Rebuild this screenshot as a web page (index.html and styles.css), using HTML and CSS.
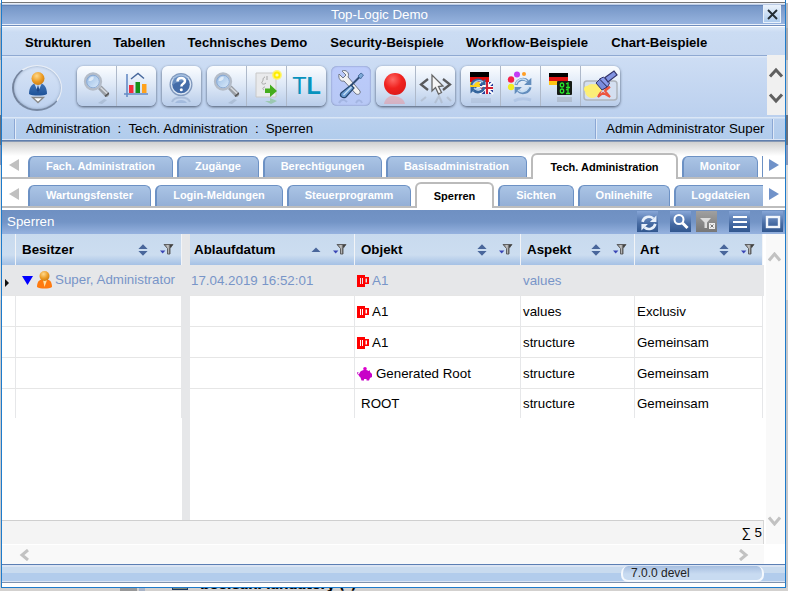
FILE: index.html
```html
<!DOCTYPE html>
<html lang="de">
<head>
<meta charset="utf-8">
<title>Top-Logic Demo</title>
<link rel="stylesheet" href="styles.css">
</head>
<body>
<svg class="defs" width="0" height="0">
  <defs>
    <linearGradient id="gLens" x1="0" y1="0" x2="1" y2="1"><stop offset="0" stop-color="#8fb6e2"/><stop offset="1" stop-color="#e3f0fd"/></linearGradient>
    <radialGradient id="gRed" cx=".4" cy=".3" r=".8"><stop offset="0" stop-color="#ff6a66"/><stop offset=".5" stop-color="#f0221f"/><stop offset="1" stop-color="#d81818"/></radialGradient>
    <radialGradient id="gHead" cx=".4" cy=".3" r=".75"><stop offset="0" stop-color="#ffd98a"/><stop offset=".6" stop-color="#eb9a22"/><stop offset="1" stop-color="#c87a12"/></radialGradient>
    <linearGradient id="gBody" x1="0" y1="0" x2="0" y2="1"><stop offset="0" stop-color="#3f74b8"/><stop offset="1" stop-color="#1e5298"/></linearGradient>
    <linearGradient id="gFunnel"><stop offset="0" stop-color="#666"/><stop offset=".45" stop-color="#ccc"/><stop offset=".7" stop-color="#444"/><stop offset="1" stop-color="#333"/></linearGradient>
    <symbol id="search" viewBox="0 0 32 34">
      <g opacity=".22"><path d="M18 33l6-4 3 1-5 4z" fill="#678"/></g>
      <path d="M18 19l3.500-3.500 7.500 7.500c1 2-1.500 4.500-3.500 4z" fill="#999ea5"/><path d="M20.500 17.500l6.500 6" stroke="#d8dade" stroke-width="1.600"/>
      <path d="M25.500 27l3.500-3v-1.800l-4.500 3.500z" fill="#555"/>
      <circle cx="13" cy="11.500" r="8" fill="url(#gLens)" stroke="#b4bcc8" stroke-width="2.300"/>
      <circle cx="13" cy="11.500" r="6.300" fill="none" stroke="#7899c8" stroke-width=".7"/>
      <path d="M8.500 11a5 5 0 0 1 5-4.500c1 3-2 5-5 4.500z" fill="#fff" opacity=".6"/>
    </symbol>
    <symbol id="sort" viewBox="0 0 10 12"><path d="M5 .3L9.600 5H.4zM5 11.700L.4 7h9.200z" fill="#49669b"/></symbol>
    <symbol id="sortup" viewBox="0 0 10 12"><path d="M5 3.400L9.500 8H.5z" fill="#49669b"/></symbol>
    <symbol id="filter" viewBox="0 0 14 11"><path d="M4 .5h9L10 4.500v5.500H7.500v-5.500z" fill="url(#gFunnel)" stroke="#555" stroke-width=".9"/><path d="M0 6.600h5.400L2.700 9.500z" fill="#3a46b5"/></symbol>
    <symbol id="cup" viewBox="0 0 12 12"><path d="M0 0h8v2h4v7H8v3H0zM3 3v6h1V3zm2 0v6h1V3zm3.500 .5v4h1.500v-4z" fill="#f00" fill-rule="evenodd"/></symbol>
    <symbol id="cycle" viewBox="0 0 18 18"><g fill="none" stroke="currentColor" stroke-width="2.600"><path d="M2.600 8a6.500 6.500 0 0 1 10.800-3.300"/><path d="M15.400 10A6.500 6.500 0 0 1 4.600 13.300"/></g><path d="M16.500 1.500V8H10zM1.500 16.500V10H8z" fill="currentColor"/></symbol>
  </defs>
</svg>
<div class="backdrop">
  <div class="behind"><span class="behind-bar"></span><span class="behind-bar2"></span><span class="behind-box"></span><span class="behind-text">booleanMandatory (*)</span></div>
  <div class="window">
    <header class="titlebar">
      <span class="title">Top-Logic Demo</span>
      <button class="close" aria-label="Schließen"><svg width="11" height="11" viewBox="0 0 11 11"><path d="M1 1l9 9M10 1l-9 9" stroke="#222c33" stroke-width="1.900"/></svg></button>
    </header>
    <nav class="menubar"><span>Strukturen</span><span>Tabellen</span><span class="wide">Technisches Demo</span><span>Security-Beispiele</span><span class="wide">Workflow-Beispiele</span><span>Chart-Beispiele</span></nav>
    <div class="toolbar">
      <div class="avatar"><svg width="22" height="34" viewBox="0 0 22 34">
        <path d="M2 23c0-8 4-11 9-11s9 3 9 11c-3 2-15 2-18 0z" fill="url(#gBody)"/><path d="M7.500 13l3.500 8 3.500-8z" fill="#c5daf4"/><path d="M11 14l1.500 5-1.500 3-1.500-3z" fill="#1c4688"/>
        <circle cx="11" cy="7.500" r="6.500" fill="url(#gHead)"/><path d="M5.500 26.500h11L11 31.500z" fill="#fff" stroke="#888" stroke-width="1.300"/></svg></div>
      <div class="group">
        <span class="tool"><svg width="32" height="34"><use href="#search"/></svg></span>
        <span class="tool"><svg width="32" height="34" viewBox="0 0 32 34"><g stroke="#668bc5" stroke-width="1.600"><path d="M7 4v23M4 24h24"/></g><path d="M11 9l7-5.500 6 5" fill="none" stroke="#46679c" stroke-width="1.400"/><path d="M9 15h4.500v8H9z" fill="#f52c3c"/><path d="M15.500 12H20v11h-4.500z" fill="#149018"/><path d="M22 14h4.500v9H22z" fill="#ffa21c"/></svg></span>
      </div>
      <div class="group">
        <span class="tool"><svg width="32" height="34" viewBox="0 0 32 34"><circle cx="16" cy="14.500" r="11.500" fill="#8199bd"/><circle cx="16" cy="14.500" r="10.200" fill="#dce7f5"/><circle cx="16" cy="14.500" r="8.800" fill="#446ca8"/><path d="M8 15c3-4 12-3 15.500-6a8.300 8.300 0 0 0-15.500 6z" fill="#7fa3d0" opacity=".6"/><path d="M12.500 11.500c0-5 7.500-4.500 7.500-.5 0 3-3.600 2.500-3.600 5.500" fill="none" stroke="#fff" stroke-width="2.500"/><circle cx="16.300" cy="19.800" r="1.500" fill="#fff"/><path d="M7 32c2-6 16-6 18 0" fill="none" stroke="#9db2d2" stroke-width="2" opacity=".7"/><path d="M10 33c2-4 10-4 12 0z" fill="#7898c8" opacity=".4"/></svg></span>
      </div>
      <div class="group">
        <span class="tool"><svg width="32" height="34"><use href="#search"/></svg></span>
        <span class="tool"><svg width="32" height="34" viewBox="0 0 32 34"><path d="M6 3h20v24H6z" fill="#e9eaec" stroke="#c8c8c8"/><path d="M15 7c-3 1-1 3-3 5-1 2 2 3 4 1m-1 4c-2 0-3 2-1 3M17 6v4" fill="none" stroke="#a5a5a5"/><path d="M15 18.500h5v-4l7 6.500-7 6v-4h-5z" fill="#45ad1d"/><path d="M15 31h5v-3l7 3-6 3z" fill="#63b95a" opacity=".4"/><circle cx="27" cy="5" r="5" fill="#fff25c" opacity=".8"/><circle cx="27" cy="5" r="3.500" fill="#ffed00"/><circle cx="27" cy="5" r="1.600" fill="#fffda8"/></svg></span>
        <span class="tool tl">T<b>L</b></span>
      </div>
      <div class="group active">
        <span class="tool"><svg width="32" height="34" viewBox="0 0 32 34"><path d="M5 4l4 4 3-3-4-4c4-2 8 2 6 6l12 14c1 3-2 4-4 3L10 11C7 12 4 9 5 4z" fill="#f2f2f2" stroke="#6e7686"/><path d="M26 6.500l-9 9" stroke="#304d76" stroke-width="2"/><path d="M24 6l3-3 2.500 2-3 4z" fill="#7ea9d8" stroke="#345a8c" stroke-width=".7"/><path d="M17 15l3 3-8 9c-3 2-7-1-5-4z" fill="#6a9bd2" stroke="#24466f" stroke-width="1.200"/><path d="M17.500 17l-8 8" stroke="#c8e2f8" stroke-width="1.200"/><path d="M5 33c3-5 6-3 8-1M22 33c2-4 5-3 6 0" stroke="#7d91bd" opacity=".35" stroke-width="2" fill="none"/></svg></span>
      </div>
      <div class="group">
        <span class="tool"><svg width="32" height="34" viewBox="0 0 32 34"><circle cx="16" cy="14" r="11" fill="url(#gRed)"/><path d="M5 34c1-6 6-9 11-8s9 3 10 8z" fill="#f77" opacity=".35"/></svg></span>
        <span class="tool"><svg width="34" height="34" viewBox="0 0 34 34"><path d="M10 9l-7 5.500L10 20M25 9l7 5.500-7 5.500" fill="none" stroke="#58595c" stroke-width="2.300"/><path d="M14 5v16l3.500-3.500 3 6.500 3-1.500-3-6 4.500-.5z" fill="#f6f6f6" stroke="#666" stroke-width="1.300"/><path d="M8 27l-5 4M17 33l4-7 3 7M29 27l4 4" fill="none" stroke="#888" opacity=".25" stroke-width="2"/></svg></span>
      </div>
      <div class="group">
        <span class="tool"><svg width="32" height="34" viewBox="0 0 32 34"><path d="M6 2h19v5H6z"/><path d="M6 7h19v5H6z" fill="#e10d0d"/><path d="M6 12h19v5H6z" fill="#ffd21d"/><path d="M16 12h13v12H16z" fill="#263c9a"/><path d="M16 12l13 12M29 12L16 24" stroke="#fff" stroke-width="2"/><path d="M16 18h13M23 12v12" stroke="#fff" stroke-width="4"/><path d="M16 18h13M23 12v12" stroke="#d31f32" stroke-width="2.200"/><svg x="5" y="7" width="18" height="18" color="#34659d"><use href="#cycle"/></svg><path d="M9 15c2-5 8-5 10-3M10 18c2 2 5 2 8-1" fill="none" stroke="#a9cbea" stroke-width="1.500"/><path d="M7 28h20v5H7z" fill="#678" opacity=".13"/></svg></span>
        <span class="tool"><svg width="32" height="34" viewBox="0 0 32 34"><circle cx="13" cy="4.500" r="3" fill="#c33cf5"/><circle cx="20" cy="4" r="2" fill="#ff9e24"/><circle cx="7" cy="9.500" r="3.200" fill="#f52149"/><circle cx="7" cy="17" r="3.200" fill="#f1ec22"/><svg x="9" y="6" width="20" height="20" color="#628dbd"><use href="#cycle"/></svg><path d="M12 14c2-6 8-6 11-3M14 20c3 3 8 2 11-3" fill="none" stroke="#c6def3" stroke-width="1.500"/><path d="M10 31c5-3 10-3 17-1" stroke="#7a9ccc" stroke-width="3" opacity=".25" fill="none"/></svg></span>
        <span class="tool"><svg width="32" height="34" viewBox="0 0 32 34"><path d="M5 3h19v4H5z"/><path d="M5 7h19v4H5z" fill="#df1212"/><path d="M5 11h19v4H5z" fill="#ffc514"/><rect x="13" y="11" width="15" height="14" rx="1" fill="#161b16"/><g fill="none" stroke="#28e42a" stroke-width="1.300"><ellipse cx="18" cy="15" rx="1.700" ry="2"/><ellipse cx="18" cy="21" rx="1.700" ry="2"/><path d="M22 14l2-1v4.500m-2 0h4M22 20l2-1v4.500m-2 0h4"/></g><path d="M13 27h15v5H13z" fill="#777" opacity=".25"/></svg></span>
        <span class="tool"><svg width="38" height="36" viewBox="0 0 38 36"><rect x="3" y="12" width="33" height="19" rx="3" fill="#d4dff0" stroke="#aeb4bc" stroke-width="1.500"/><path d="M19 17l3 3 7-2-5 4 5 6-7-4-5 4 3-7" fill="none" stroke="#ed553f" stroke-width="2"/><circle cx="11" cy="22" r="7" fill="#fff06b" opacity=".9"/><circle cx="6" cy="20" r="3" fill="#fff06b"/><path d="M10 18l6-4 6 6-5 5z" fill="#ffee72"/><path d="M15 14l4-4 7 8-5 3z" fill="#798bdc" stroke="#32336a"/><path d="M18.500 10l4-2 6 6-2 4z" fill="#8b9cec" stroke="#32336a"/><path d="M24 8.500L33 2l3 4-9 7z" fill="#8193e2" stroke="#32336a" stroke-width="1.200"/></svg></span>
      </div>
      <div class="toolscroll"><svg width="18" height="60" viewBox="0 0 18 60"><path d="M3 21.500L9 15l6 6.500M3 39.500L9 46l6-6.500" fill="none" stroke="#606060" stroke-width="3"/></svg></div>
    </div>
    <div class="crumbs"><span class="trail"><span>Administration</span><i>:</i><span>Tech. Administration</span><i>:</i><span>Sperren</span></span><span class="user">Admin Administrator Super</span></div>
    <div class="tabs first"><svg class="arrow" width="10" height="12"><path d="M10 0v12L0 6z" fill="#c0c0c0"/></svg>
      <div class="tablist one"><span>Fach. Administration</span><span>Zugänge</span><span>Berechtigungen</span><span>Basisadministration</span><span class="current">Tech. Administration</span><span>Monitor</span><span class="cut"></span></div>
      <svg class="arrow" width="10" height="12"><path d="M0 0v12l10-6z" fill="#7092c9"/></svg></div>
    <div class="tabs second"><svg class="arrow" width="10" height="12"><path d="M10 0v12L0 6z" fill="#c0c0c0"/></svg>
      <div class="tablist two"><span>Wartungsfenster</span><span>Login-Meldungen</span><span>Steuerprogramm</span><span class="current">Sperren</span><span>Sichten</span><span>Onlinehilfe</span><span class="last">Logdateien</span></div>
      <svg class="arrow" width="10" height="12"><path d="M0 0v12l10-6z" fill="#7092c9"/></svg></div>
    <div class="panelhead"><span>Sperren</span>
      <div class="actions">
        <b><svg width="18" height="18" viewBox="-1 -1 20 20" color="#e8f0fa"><use href="#cycle"/></svg></b>
        <b><svg width="20" height="20" viewBox="0 0 20 20"><circle cx="8" cy="7.500" r="4.500" fill="#587eb8" stroke="#fff" stroke-width="2"/><path d="M11.500 11l5 5" stroke="#fff" stroke-width="3"/></svg></b>
        <b class="off"><svg width="20" height="20" viewBox="0 0 20 20"><path d="M3 6h11l-4 4.500V16H7.500v-5.500z" fill="#ddd"/><path d="M12 11h6v6h-6z" fill="#eee"/><path d="M13.500 12.500l3 3m0-3l-3 3" stroke="#777"/></svg></b>
        <b><svg width="20" height="20" viewBox="0 0 20 20"><path d="M3 5h14M3 10h14M3 15h14" stroke="#fff" stroke-width="2"/></svg></b>
        <b><svg width="20" height="20" viewBox="0 0 20 20"><rect x="4" y="5" width="12" height="10" fill="none" stroke="#f2f6fc" stroke-width="2.400"/></svg></b>
      </div>
    </div>
    <div class="content">
      <div class="main">
        <div class="row head"><div></div><div>Besitzer<svg class="s"><use href="#sort"/></svg><svg class="f"><use href="#filter"/></svg></div><div class="gap"></div><div>Ablaufdatum<svg class="s"><use href="#sortup"/></svg><svg class="f"><use href="#filter"/></svg></div><div>Objekt<svg class="s"><use href="#sort"/></svg><svg class="f"><use href="#filter"/></svg></div><div>Aspekt<svg class="s"><use href="#sort"/></svg><svg class="f"><use href="#filter"/></svg></div><div>Art<svg class="s"><use href="#sort"/></svg><svg class="f"><use href="#filter"/></svg></div></div>
        <div class="row selected"><div class="marker"><svg width="4" height="8"><path d="M0 0l4 4-4 4z" fill="#111"/></svg></div><div class="owner"><svg width="11" height="9"><path d="M0 0h11L5.500 9z" fill="#00f"/></svg><svg width="15" height="18" viewBox="0 0 15 18"><path d="M0 16c0-6 3-8 7.500-8s7.500 2 7.500 8c-3 2-12 2-15 0z" fill="#ff7a0f"/><path d="M6 9l1.500 7L10 9z" fill="#ffe2a8"/><circle cx="7.500" cy="5" r="5" fill="url(#gHead)"/></svg><span>Super, Administrator</span></div><div class="gap"></div><div class="date">17.04.2019 16:52:01</div><div><svg class="cup"><use href="#cup"/></svg>A1</div><div>values</div><div></div></div>
        <div class="row"><div></div><div></div><div class="gap"></div><div></div><div><svg class="cup"><use href="#cup"/></svg>A1</div><div>values</div><div>Exclusiv</div></div>
        <div class="row"><div></div><div></div><div class="gap"></div><div></div><div><svg class="cup"><use href="#cup"/></svg>A1</div><div>structure</div><div>Gemeinsam</div></div>
        <div class="row"><div></div><div></div><div class="gap"></div><div></div><div><svg class="pig" width="15" height="14" viewBox="0 0 15 14"><circle cx="8" cy="1.800" r="1.800" fill="#d0c"/><path d="M4 4c2-1.500 6-1.500 8 0l1-1v2l2 2v3l-2 1-1 2.500H9.500V12H7v1.500H4.500l-1-3C1 9 2 6 4 4z" fill="#c800c8"/><path d="M3 8C1 8 0 7 1 5" fill="none" stroke="#c800c8"/></svg>Generated Root</div><div>structure</div><div>Gemeinsam</div></div>
        <div class="row end"><div></div><div></div><div class="gap"></div><div></div><div class="root">ROOT</div><div>structure</div><div>Gemeinsam</div></div>
        <div class="rest"></div>
        <div class="sum">∑ 5</div>
        <div class="hscroll"><svg width="10" height="12"><path d="M9 1L3 6l6 5" fill="none" stroke="#c2c2c2" stroke-width="3"/></svg><svg width="10" height="12"><path d="M1 1l6 5-6 5" fill="none" stroke="#c2c2c2" stroke-width="3"/></svg></div>
      </div>
      <div class="vscroll"><svg width="13" height="10"><path d="M1 8.500L6.500 2 12 8.500" fill="none" stroke="#c2c2c2" stroke-width="3"/></svg><svg width="13" height="10"><path d="M1 1.500L6.500 8 12 1.500" fill="none" stroke="#c2c2c2" stroke-width="3"/></svg></div>
    </div>
    <footer class="status"><span>7.0.0 devel</span></footer>
  </div>
</div>
</body>
</html>
```

FILE: styles.css
```css
* { box-sizing: border-box; }
body { margin: 0; font: 13.33px/16px "Liberation Sans", Arial, sans-serif; color: #000; overflow: hidden; }
svg { display: block; flex: none; }
.defs { position: absolute; }
.backdrop { position: relative; width: 788px; height: 591px; overflow: hidden; background: linear-gradient(#fff 0 3px, #b9b9bd 3px 28px, #a9aaae 28px 60px, #c9c9c9 60px 115px, #68717f 115px 145px, #8a98b8 145px 165px, #dcdcdc 165px 300px, #c8c8ca 300px 587px, #d3d1cf 587px); }
.behind { position: absolute; left: 0; top: 578px; width: 788px; height: 13px; }
.behind-bar, .behind-bar2, .behind-box { position: absolute; top: 8px; height: 5px; }
.behind-bar { left: 120px; width: 17px; background: #999; }
.behind-bar2 { left: 139px; width: 6px; background: #a9b4c7; }
.behind-box { left: 172px; width: 16px; height: 4px; background: #7c8472; border: 1px solid #203a5c; }
.behind-text { position: absolute; left: 200px; top: -2px; font: bold 14px/16px "DejaVu Sans", sans-serif; letter-spacing: -.85px; white-space: nowrap; }
.window { position: relative; width: 785px; height: 588px; margin-left: 1px; display: flex; flex-direction: column; background: #fff; border: 1px solid #1e7bcb; border-top: 0; }

.titlebar { height: 27px; flex: none; border-top: 2px solid #fff; display: flex; justify-content: center; align-items: center; color: #fff; position: relative; background: linear-gradient(#777 0 1px, #e6ecf5 1px 2px, #bccce5 2px 3px, #6384b7 3px 4px, #7596c7 4px, #8aa8d5 15px, #96b3df 22px, #e8effa 22px 23px, #6f8dbd 23px 24px, #fff 24px); }
.title { padding-right: 26px; padding-top: 1px; margin-left: -2px; }
.close { position: absolute; right: 4px; top: 3px; width: 18px; height: 18px; padding: 0; border: 1px solid #e8f1fb; background: linear-gradient(#e8f1fb, #adcbed); display: grid; place-items: center; }
.menubar { height: 28px; flex: none; display: flex; gap: 22px; padding: 8px 23px 0; font-weight: bold; font-size: 13.1px; white-space: nowrap; background: linear-gradient(#dce8f7, #cbdcf3 5px, #c8d9f1); }
.wide { letter-spacing: .1px; margin-right: 1px; }
.toolbar { height: 62px; flex: none; display: flex; align-items: flex-start; padding: 11px 0 0 10px; position: relative; background: linear-gradient(#8fa9d2 0 1px, #dbe7f7 1px 2px, #cdddf4 3px, #bbd0ee); }
.avatar { width: 50px; height: 46px; margin: -1px 15px 0 0; border-radius: 50%; border: 1px solid #e9eef5; border-left: 2px solid #74839c; border-bottom: 2px solid #7788a2; background: linear-gradient(#d6e3f6, #bed2ef); display: grid; place-items: center; box-shadow: inset 0 0 3px #8ca0bd; }
.group { display: flex; height: 40px; border-radius: 6px; margin-right: 6px; overflow: hidden; background: linear-gradient(#fbfdff, #dce7f6 50%, #b9cdea); box-shadow: 0 1px 3px #49566c; }
.group:nth-child(4) { margin-right: 5px; }
.tool { width: 40px; display: grid; place-items: center; overflow: hidden; }
.tool:first-child { width: 39px; }
.tool + .tool { border-left: 1px solid #aeb9ca; }
.tool svg { margin: 2px 0 0 -2px; }
.active { background: linear-gradient(#bccbfb, #b7c8f5); box-shadow: inset 0 0 2px #707fa7; }
.active + .group { margin-left: -1px; }
.active .tool { width: 40px; }
.tl { display: flex; justify-content: center; align-items: center; color: #0793bd; font-size: 23.500px; line-height: 25px; }
.toolscroll { position: absolute; right: 0; top: 0; width: 18px; height: 60px; background: #f0f0f0; }
.crumbs { height: 25px; flex: none; display: flex; justify-content: space-between; padding: 2px 12px 3px; line-height: 19px; background: linear-gradient(#dbe7f6 0 1px, #b9d0ee 2px, #b1ccec 22px, #dbe5f4 22px 23px, #607fae 23px 24px, #8799b5 24px); }
.trail { display: flex; border-left: 1px solid #8ba7d4; box-shadow: inset 1px 0 #e3ecf8; padding-left: 11px; }
.trail i { font-style: normal; width: 18px; text-align: center; }
.user { width: 178px; border: solid #8ba7d4; border-width: 0 1px; padding-left: 10px; box-shadow: inset 1px 0 #dfe9f7, 1px 0 #dfe9f7; white-space: nowrap; }

.tabs { height: 37px; flex: none; display: flex; padding: 17px 6px 0 7px; color: #fff; font: bold 11px/19px "Liberation Sans", Arial, sans-serif; background: linear-gradient(#d0d0d0, #fff 14px, #fff 35px, #bdbdbd 35px); }
.second { height: 31px; padding-top: 9px; background: linear-gradient(#fff 27px, #bdbdbd 27px 29px, #fff 29px); }
.tablist { display: grid; width: 735px; margin: -6px 6px 0 9px; column-gap: 4px; align-items: end; }
.one { grid-template-columns: 145px 82px 119px 141px 147px 76px 1px; height: 26px; }
.two { grid-template-columns: 123px 128px 124px 79px 76px 92px 89px; height: 26px; }
.tablist span { height: 21px; text-align: center; margin-bottom: 2px; border: 2px solid #6c91c4; border-top-width: 1px; border-bottom: 0; border-right-width: 1px; border-radius: 6px 6px 0 0; background: linear-gradient(#aac4e5, #94afd6); }
.tablist span:not(.current) { padding-right: 1px; }
.tablist .current { height: 26px; margin-bottom: 0; padding-top: 3px; color: #000; background: #fff; border: 2px solid #bbb; border-bottom: 0; }
.tablist .cut, .tablist .last { border-right: 0; border-top-right-radius: 0; }
.tablist .last { padding-left: 3px; }
.tablist .cut { border: 0; padding: 0; border-radius: 0; background: #6c91c4; }
.panelhead { height: 24px; flex: none; display: flex; justify-content: space-between; padding: 4px 2px 0 5px; color: #fff; background: linear-gradient(#6f90c2, #7394c6 12px, #96b2df); }
.actions { display: flex; margin-top: -3px; }
.actions b { width: 21px; height: 21px; display: grid; place-items: center; background: linear-gradient(#87a6d7, #476ba3 60%, #31578f); }
.actions b:nth-child(1), .actions b:nth-child(4) { margin-right: 12px; }
.actions b:nth-child(2) { margin-right: 5px; }
.actions b:nth-child(3) { margin-right: 12px; }
.actions .off { background: linear-gradient(#a0a0a0, #777); }

.content { flex: none; height: 330px; display: flex; }
.main { width: 763px; }
.row { display: grid; grid-template-columns: 14px 166px 8px 165px 166px 114px 128px; height: 31px; }
.row > div { display: flex; align-items: center; border-right: 1px solid #e6e7e9; border-bottom: 1px solid #e6e6e6; padding-left: 2px; white-space: nowrap; padding-top: 1px; }
.row > .gap { background: #e6e7e9; border: 0; }
.head { font-weight: bold; }
.head > div { padding: 0 7px 0 6px; background: linear-gradient(#c8daee, #ccddf0 21px, #a5c1e5); border-right-color: #f2f4f7; border-bottom: 0; }
.head > div:nth-child(4) { padding-left: 4px; }
.head > div:nth-child(7) { padding-left: 5px; }
.s { width: 10px; height: 12px; margin-left: auto; margin-right: 12px; }
.f { width: 14px; height: 11px; }
.selected { color: #7895c8; background: #e6e7e9; }
.row > .marker { padding: 5px 0 0 3px; }
.row > .date { padding-left: 1px; }
.owner > svg + svg { margin: 0 3px 0 4px; }
.row > .owner { padding-left: 6px; padding-top: 0; }
.cup { width: 12px; height: 12px; margin-right: 3px; }
.row > .root { padding-left: 6px; }
.pig { margin-right: 4px; }
.end { height: 29px; }
.end > div { border-bottom: 0; padding-top: 0; }
.rest { height: 102px; background: linear-gradient(90deg, #fff 180px, #e6e7e9 180px 188px, #fff 188px); }
.sum { height: 24px; border-top: 1px solid #cfcfcf; border-right: 1px solid #d7d7d7; padding: 4px 1px 0; text-align: right; background: #f4f4f4; }
.hscroll { height: 19px; margin-top: 1px; padding: 4px 15px 0 17px; display: flex; justify-content: space-between; background: #f9f9f9; }
.vscroll { width: 20px; height: 310px; margin-left: 1px; padding: 18px 2px 18px 3px; display: flex; flex-direction: column; justify-content: space-between; background: linear-gradient(90deg, #fff 1px, #f9f9f9 1px); }
.status { flex: none; height: 20px; display: flex; justify-content: flex-end; padding: 2px 21px 0 0; font-size: 12px; line-height: 14px; color: #222; background: linear-gradient(#5c7fb4 0 1px, #dbe5f4 1px 3px, #c9dbef 3px 9px, #b2ccec 9px 17px, #dbe5f4 17px 18px, #7f92ae 18px 19px, #fff 19px); }
.status span { width: 143px; height: 16px; padding-left: 8px; border: solid #f4f8fd; border-width: 0 2px 2px; border-radius: 7px; background: linear-gradient(#a7bfe0, #c8dbf1 8px); }
```
